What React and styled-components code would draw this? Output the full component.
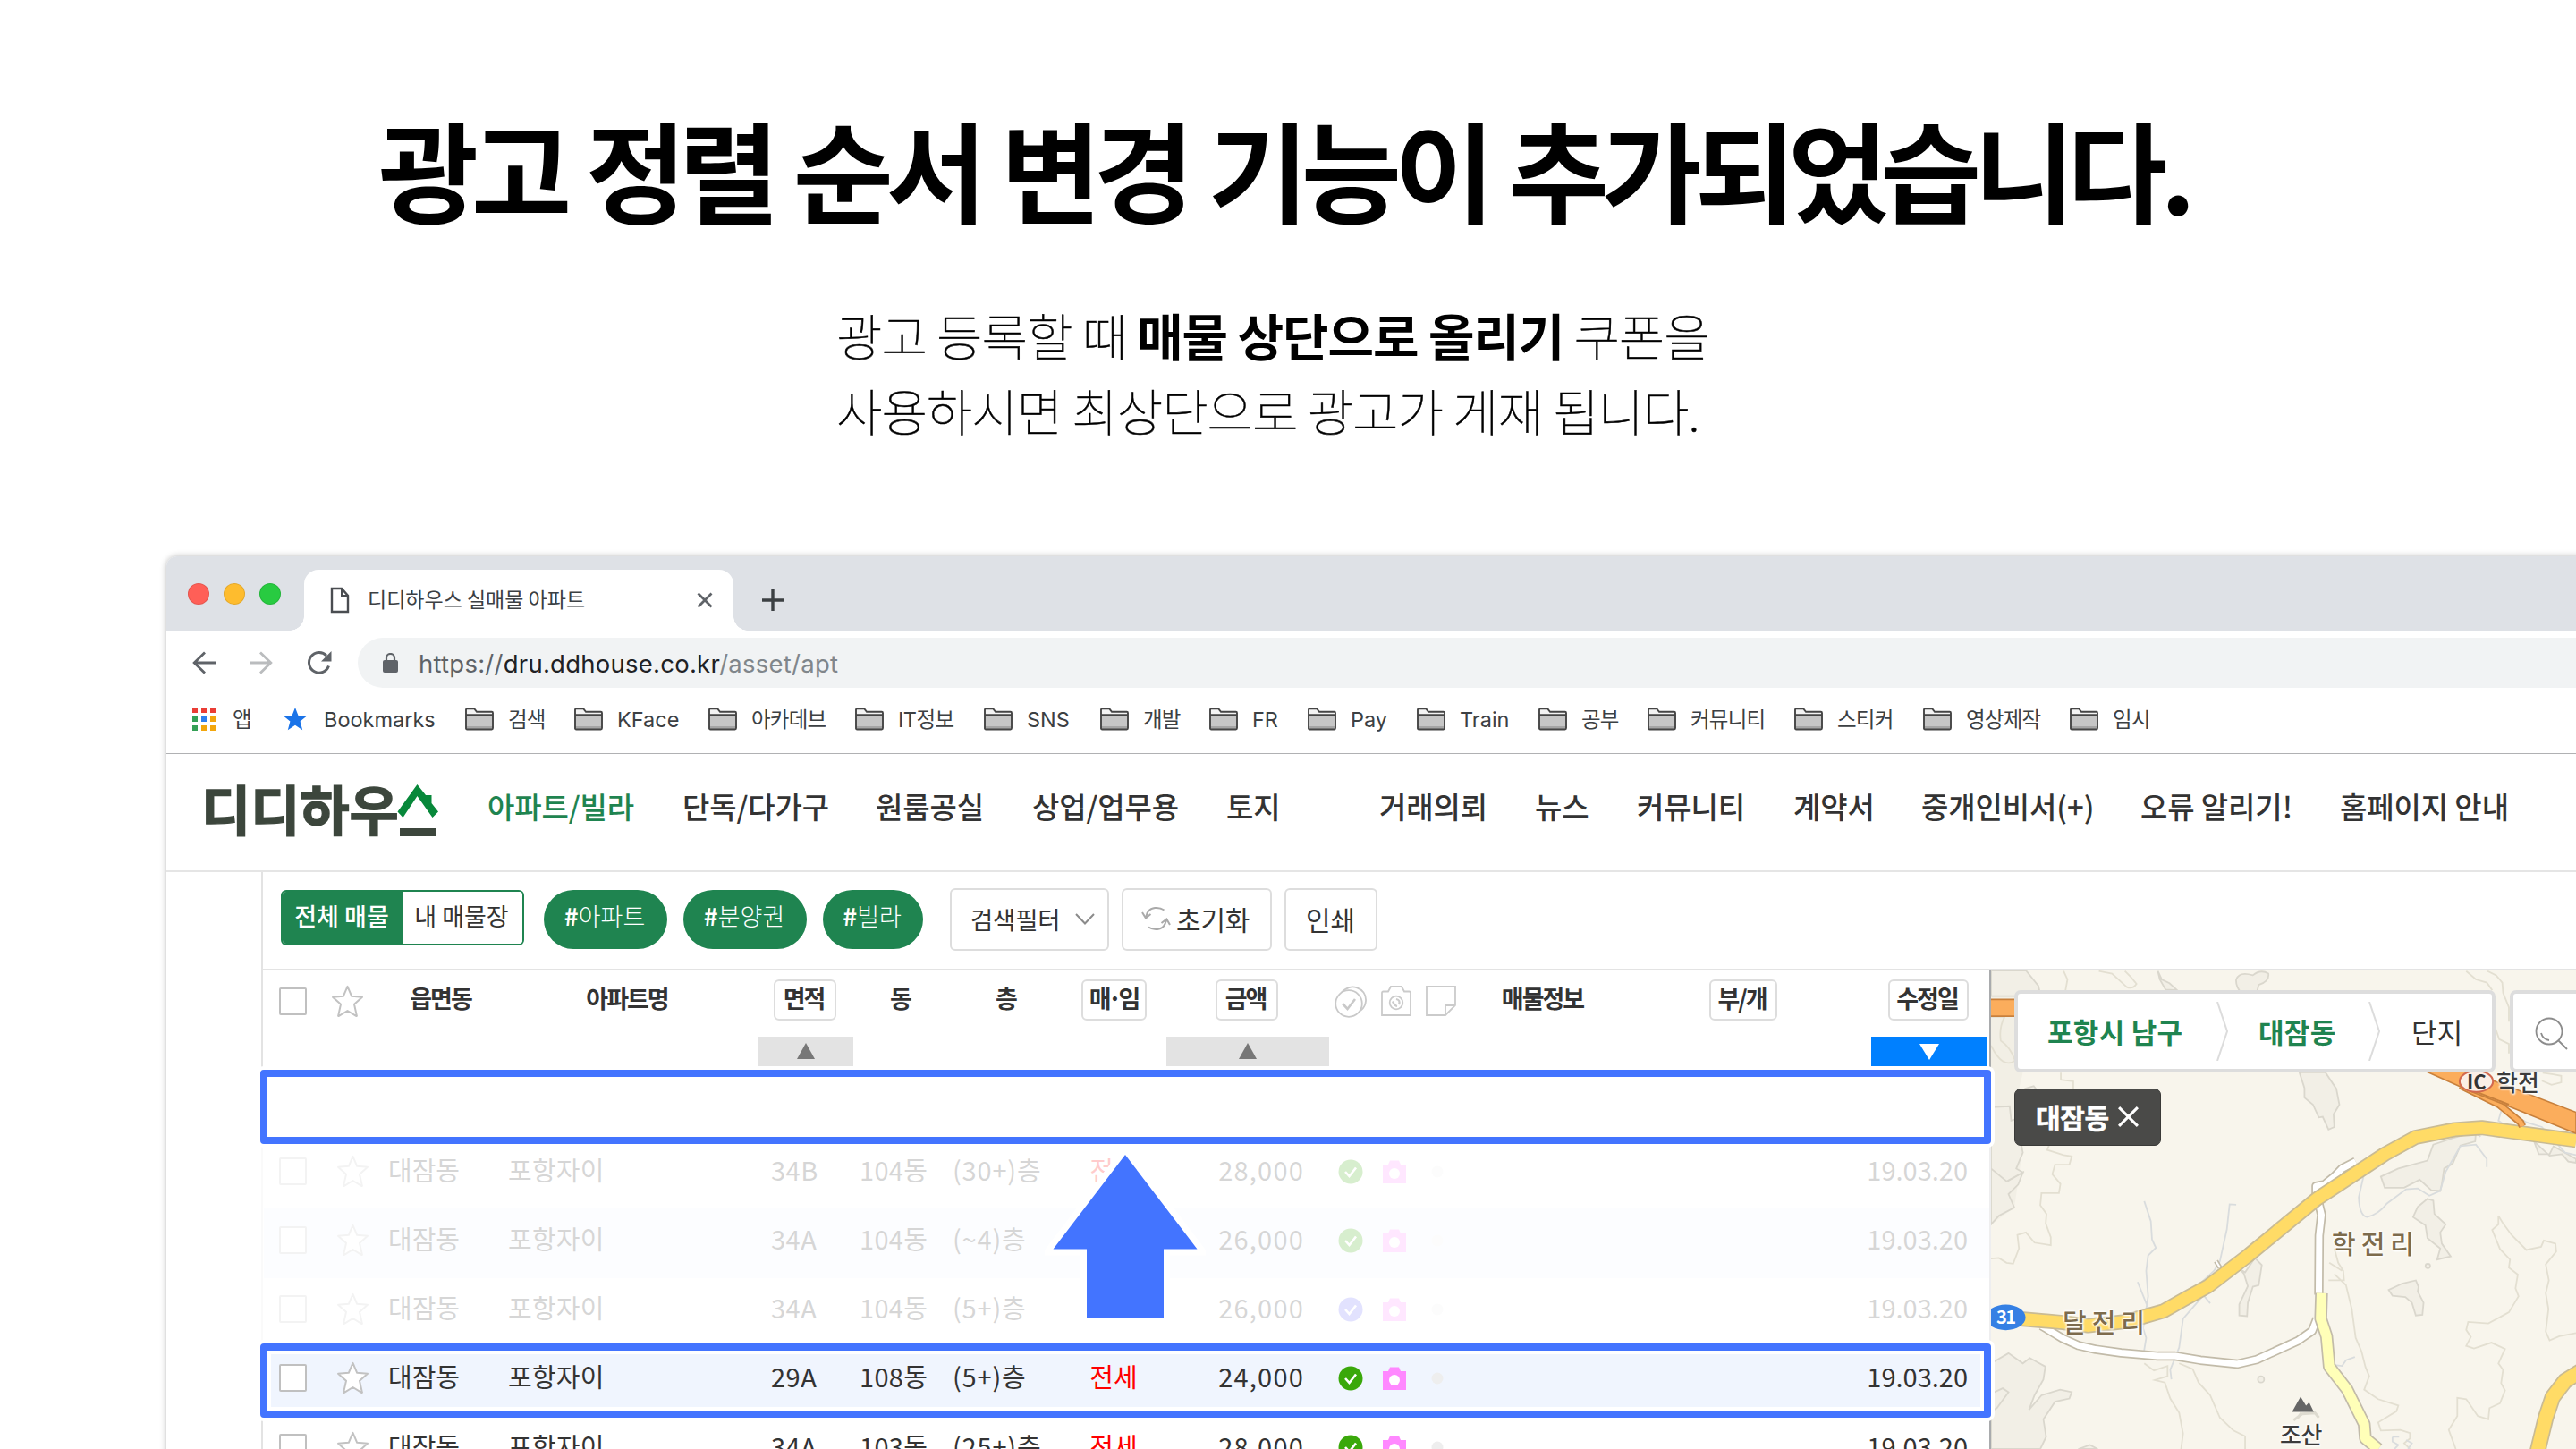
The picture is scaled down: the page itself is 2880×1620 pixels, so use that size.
import React from "react";
import styled, { createGlobalStyle, css } from "styled-components";

const KR = '"Noto Sans CJK KR", "Noto Sans", sans-serif';
const UI = 'Inter, "Noto Sans CJK KR", sans-serif';
const GREEN = "#1f8450";
const BLUE = "#4374ff";

const GlobalStyle = createGlobalStyle`
  *, *::before, *::after { box-sizing: border-box; }
  body { margin: 0; background: #fff; overflow: hidden; }
  svg { display: block; flex: none; }
`;

const Page = styled.main`
  width: 2880px;
  height: 1620px;
  overflow: hidden;
  background: #fff;
  color: #000;
  font-family: ${KR};
  white-space: nowrap;
`;

/* ---------- Hero ---------- */

const Hero = styled.header`
  height: 622px;
  padding-top: 117px;
`;

const Title = styled.h1`
  margin: 0;
  padding-left: 423px;
  font-size: 122px;
  line-height: 140px;
  font-weight: 700;
  letter-spacing: -8.15px;
  word-spacing: 4.2px;
`;

const Subtitle = styled.p`
  margin: 75px 0 0;
  padding-left: 935px;
  font-size: 56px;
  line-height: 83.5px;
  font-weight: 100;
  letter-spacing: -1.1px;
  -webkit-text-stroke: 0.5px #000;
  b { font-weight: 700; -webkit-text-stroke: 0; }
`;

/* ---------- Browser chrome ---------- */

const BrowserWindow = styled.section`
  margin-left: 186px;
  width: 2720px;
  height: 1100px;
  background: #fff;
  border-radius: 12px 0 0 0;
  box-shadow: 0 0 7px rgba(0, 0, 0, 0.28);
`;

const TabStrip = styled.div`
  display: flex;
  height: 83px;
  padding: 15px 0 0 24px;
  background: #dee1e6;
  border-radius: 12px 0 0 0;
`;

const Lights = styled.div`
  display: flex;
  gap: 16px;
  width: 130px;
  padding-top: 15px;
`;

const Light = styled.span`
  width: 24px;
  height: 24px;
  border-radius: 50%;
  background: ${(p) => p.$color};
  border: 1px solid rgba(0, 0, 0, 0.1);
`;

const Tab = styled.div`
  position: relative;
  display: flex;
  align-items: center;
  width: 480px;
  height: 68px;
  padding: 0 23px 0 29px;
  background: #fff;
  border-radius: 16px 16px 0 0;
  &::before, &::after {
    content: "";
    position: absolute;
    bottom: 0;
    width: 16px;
    height: 16px;
  }
  &::before { right: 100%; background: radial-gradient(circle at 0 0, transparent 15.5px, #fff 16px); }
  &::after { left: 100%; background: radial-gradient(circle at 100% 0, transparent 15.5px, #fff 16px); }
`;

const TabTitle = styled.span`
  flex: 1;
  padding: 0 0 5px 20px;
  font-size: 23px;
  line-height: 30px;
  color: #3c4043;
`;

const NewTab = styled.div`
  padding: 22px 0 0 32px;
`;

const Toolbar = styled.div`
  display: flex;
  align-items: center;
  height: 72px;
  padding-left: 29px;
`;

const NavButtons = styled.div`
  display: flex;
  align-items: center;
  gap: 38px;
  width: 185px;
`;

const AddressBar = styled.div`
  flex: 1;
  display: flex;
  align-items: center;
  gap: 23px;
  height: 56px;
  padding-left: 28px;
  background: #f1f3f4;
  border-radius: 28px 0 0 28px;
`;

const Url = styled.span`
  padding-top: 1px;
  font-family: ${UI};
  font-size: 27.5px;
  line-height: 36px;
  color: #80868b;
  letter-spacing: 0.25px;
  i { font-style: normal; color: #5f6368; }
  b { font-weight: 400; color: #202124; }
`;

const BookmarkBar = styled.div`
  display: flex;
  height: 66px;
  padding: 0 0 11px 29px;
  border-bottom: 1px solid #b0b1b3;
`;

const Bookmark = styled.span`
  display: flex;
  align-items: center;
  gap: ${(p) => p.$gap || 16}px;
  width: ${(p) => p.$w}px;
  font-family: ${UI};
  font-size: 23.5px;
  line-height: 30px;
  color: #3c4043;
  letter-spacing: ${(p) => p.$ls || 0}px;
  span { padding-top: 2px; }
`;

/* ---------- Site header ---------- */

const SiteNav = styled.nav`
  display: flex;
  align-items: center;
  height: 132px;
  padding: 0 0 15px 39px;
  border-bottom: 2px solid #e5e5e5;
`;

const Logo = styled.div`
  display: flex;
  align-items: center;
  width: 320px;
  height: 100px;
  padding-top: 5px;
  color: #3c463c;
  font-size: 60px;
  line-height: 80px;
  font-weight: 700;
  svg { margin-top: 6px; }
`;

const Wordmark = styled.span`
  width: 219px;
  letter-spacing: 0;
  -webkit-text-stroke: 1.4px #3c463c;
`;

const NavItem = styled.a`
  width: ${(p) => p.$w}px;
  font-size: 33px;
  line-height: 44px;
  font-weight: 500;
  letter-spacing: -0.1px;
  color: ${(p) => (p.$active ? GREEN : "#333")};
`;

/* ---------- Filters ---------- */

const Content = styled.div`
  margin-left: 106px;
  border-left: 2px solid #e3e3e3;
`;

const FilterBar = styled.div`
  display: flex;
  height: 110px;
  padding: 18px 0 0 20px;
  border-bottom: 2px solid #e3e3e3;
`;

const Segmented = styled.div`
  display: flex;
  width: 272px;
  height: 62px;
  margin: 2px 22px 0 0;
  border: 2px solid ${GREEN};
  border-radius: 6px;
  overflow: hidden;
`;

const Segment = styled.span`
  flex: 1;
  padding: 7px 2px 0 0;
  text-align: center;
  font-size: 27px;
  line-height: 40px;
  font-weight: ${(p) => (p.$on ? 500 : 400)};
  color: ${(p) => (p.$on ? "#fff" : "#333")};
  background: ${(p) => (p.$on ? GREEN : "#fff")};
`;

const Pill = styled.span`
  width: ${(p) => p.$w}px;
  height: 66px;
  margin: 2px 18px 0 0;
  padding: 9px 2px 0 0;
  border-radius: 33px;
  background: ${GREEN};
  color: #fff;
  text-align: center;
  font-size: 27px;
  line-height: 40px;
  font-weight: 300;
  letter-spacing: 0;
  b { font-weight: 700; }
`;

const FilterButton = styled.button`
  display: flex;
  align-items: center;
  justify-content: flex-start;
  gap: ${(p) => p.$gap || 0}px;
  width: ${(p) => p.$w}px;
  height: 70px;
  margin: 0 14px 0 ${(p) => p.$ml || 0}px;
  padding: 0 0 2px ${(p) => p.$pl}px;
  border: 2px solid #ddd;
  border-radius: 6px;
  background: #fff;
  color: #333;
  font-family: ${KR};
  font-size: ${(p) => p.$fs || 30}px;
  line-height: 40px;
  font-weight: 400;
  letter-spacing: -0.2px;
`;

/* ---------- Listing table ---------- */

const Split = styled.div`
  display: flex;
`;

const Listing = styled.div`
  position: relative;
  z-index: 1;
  width: 1932px;
  height: 560px;
  padding-left: 1px;
  border-right: 2px solid #a9abad;
`;

const columns = css`
  display: grid;
  grid-template-columns: 65px 71px 124px 293px 106px 106px 130px 114px 182px 49px 51px 50px 178px 272px 6px 130px;
`;

const HeadRow = styled.div`
  ${columns}
  height: 111px;
  padding-top: 10px;
`;

const HeadCell = styled.div`
  display: flex;
  flex-direction: column;
  align-items: center;
  gap: 18px;
`;

const HeadLabel = styled.span`
  display: flex;
  align-items: center;
  justify-content: center;
  width: ${(p) => (p.$w ? p.$w + "px" : "auto")};
  height: 46px;
  margin-right: ${(p) => (p.$w ? 3 : 1)}px;
  padding-bottom: 5px;
  border: ${(p) => (p.$w ? "2px solid #ddd" : "2px solid transparent")};
  border-radius: 6px;
  color: #333;
  font-size: 27px;
  line-height: 36px;
  font-weight: 700;
  letter-spacing: ${(p) => p.$ls || -2}px;
  text-indent: ${(p) => (p.$w ? -2 : 0)}px;
`;

const HeadIcon = styled.span`
  display: flex;
  align-items: center;
  justify-content: center;
  height: 48px;
  margin-right: ${(p) => p.$shift || 0}px;
`;

const Sort = styled.span`
  display: flex;
  align-items: center;
  justify-content: center;
  align-self: stretch;
  height: 33px;
  background: ${(p) => (p.$on ? "#0080ff" : "#e3e3e3")};
`;

const Slot = styled.div`
  height: 79px;
`;

const Row = styled.div`
  ${columns}
  height: ${(p) => p.$h}px;
  padding-bottom: 12px;
  align-items: center;
  background: ${(p) => (p.$tint ? "#f0f5fe" : "#fff")};
  color: #333;
  font-size: 29px;
  line-height: 40px;
`;

const Cell = styled.span`
  display: flex;
  justify-content: ${(p) => p.$align || "flex-start"};
  padding: 0 ${(p) => p.$pr || 0}px 0 ${(p) => p.$pl || 0}px;
  color: ${(p) => p.$color || "inherit"};
  letter-spacing: ${(p) => p.$ls || 0}px;
`;

const IconCell = styled(Cell)`
  padding-top: 5px;
`;

const Veil = styled.div`
  position: absolute;
  left: -3px;
  right: -2px;
  top: 190px;
  height: 230px;
  background: rgba(255, 255, 255, 0.8);
`;

const Highlight = styled.div`
  position: absolute;
  left: -3px;
  top: ${(p) => p.$top}px;
  width: 1935px;
  height: 83px;
  border: 8px solid ${BLUE};
  border-radius: 4px;
  box-shadow: 0 0 0 4px #fff, inset 0 0 0 4px #fff;
`;

const ArrowOverlay = styled.div`
  position: absolute;
  left: 874px;
  top: 196px;
`;

/* ---------- Map ---------- */

const MapPane = styled.div`
  position: relative;
  width: 654px;
  height: 535px;
  overflow: hidden;
  background: #f8f5ec;
`;

const MapControls = styled.div`
  position: absolute;
  left: 26px;
  top: 22px;
  display: flex;
  gap: 16px;
`;

const Crumbs = styled.div`
  display: flex;
  align-items: center;
  width: 538px;
  height: 92px;
  padding: 0 0 0 33px;
  background: #fff;
  border: 4px solid #ddd;
  border-radius: 7px;
`;

const Crumb = styled.span`
  width: ${(p) => p.$w}px;
  font-size: 31px;
  line-height: 40px;
  font-weight: ${(p) => (p.$on ? 700 : 400)};
  letter-spacing: 0.3px;
  color: ${(p) => (p.$on ? GREEN : "#333")};
`;

const CrumbGap = styled.span`
  width: ${(p) => p.$w}px;
`;

const SearchBox = styled.div`
  width: 200px;
  height: 92px;
  padding: 26px 0 0 24px;
  background: #fff;
  border: 4px solid #ddd;
  border-radius: 7px;
`;

const Chip = styled.div`
  position: absolute;
  left: 26px;
  top: 132px;
  display: flex;
  align-items: center;
  gap: 9px;
  width: 164px;
  height: 64px;
  padding: 0 0 2px 23px;
  background: #4a4a48;
  border: 1px solid #3a3a38;
  border-radius: 7px;
  color: #fff;
  font-size: 30px;
  line-height: 40px;
  font-weight: 700;
  letter-spacing: -0.3px;
  -webkit-text-stroke: 0.6px #fff;
`;

const MapLabel = styled.span`
  position: absolute;
  left: ${(p) => p.$x}px;
  top: ${(p) => p.$y}px;
  font-size: ${(p) => p.$fs || 29}px;
  line-height: 36px;
  font-weight: ${(p) => p.$fw || 500};
  letter-spacing: ${(p) => p.$ls || 0}px;
  color: ${(p) => p.$color || "#7d6b4c"};
  text-shadow: ${(p) =>
    p.$plain ? "none" : "0 0 3px #fff, 0 0 3px #fff, 1px 1px 2px #fff, -1px -1px 2px #fff"};
`;

/* ---------- Icons ---------- */

const FileIcon = () => (
  <svg width="22" height="30" viewBox="0 0 22 30" fill="none" stroke="#4a4d51" strokeWidth="2.4">
    <path d="M2 2h11l7 8v18H2z" />
    <path d="M13 2v8h7" strokeWidth="2" />
  </svg>
);

const CloseIcon = ({ size = 18, color = "#5f6368", width = 2.8 }) => (
  <svg width={size} height={size} viewBox="0 0 18 18" stroke={color} strokeWidth={width}>
    <path d="M1.5 1.5l15 15M16.5 1.5l-15 15" />
  </svg>
);

const PlusIcon = () => (
  <svg width="24" height="24" viewBox="0 0 24 24" stroke="#3c4043" strokeWidth="3.4">
    <path d="M12 0v24M0 12h24" />
  </svg>
);

const ArrowIcon = ({ forward }) => (
  <svg width="26" height="26" viewBox="0 0 26 26" fill="none" strokeWidth="2.8"
    stroke={forward ? "#babcbe" : "#5f6368"} transform={forward ? "scale(-1,1)" : undefined}>
    <path d="M26 13H2.5M14 1.5L2.2 13 14 24.5" />
  </svg>
);

const ReloadIcon = () => (
  <svg width="28" height="28" viewBox="0 0 28 28" fill="none" stroke="#5f6368" strokeWidth="3">
    <path d="M24.5 17.5A11.3 11.3 0 1 1 22 6" />
    <path d="M27.5 1v11.5H16z" fill="#5f6368" stroke="none" />
  </svg>
);

const LockIcon = () => (
  <svg width="17" height="22" viewBox="0 0 17 22">
    <rect x="0" y="8" width="17" height="14" rx="2" fill="#5f6368" />
    <path d="M4 9V5.5a4.5 4.5 0 0 1 9 0V9" fill="none" stroke="#5f6368" strokeWidth="2.2" />
  </svg>
);

const AppsIcon = () => {
  const colors = ["#ea3d35", "#ea3d35", "#ea3d35", "#34a056", "#2d7fee", "#f2a60d", "#34a056", "#f2a60d", "#f2a60d"];
  return (
    <svg width="26" height="26" viewBox="0 0 26 26">
      {colors.map((c, i) => (
        <rect key={i} x={(i % 3) * 10} y={Math.floor(i / 3) * 10} width="6" height="6" fill={c} />
      ))}
    </svg>
  );
};

const BookmarkStar = () => (
  <svg width="26" height="26" viewBox="0 0 26 26">
    <path d="M13 0l3.6 9.2 9.4.4-7.400 6 2.600 9.600L13 19.800 4.800 25.200l2.600-9.600L0 9.600l9.400-.4z" fill="#1a73e8" />
  </svg>
);

const FolderIcon = () => (
  <svg width="32" height="26" viewBox="0 0 32 26">
    <path d="M1 24V2.500Q1 1.200 2.200 1.200h8L13 4.800h16.800Q31 4.800 31 6v18z" fill="#f3f3f3" />
    <path d="M1 8.500h30V24H1z" fill="#c6c6c6" />
    <path d="M1 21h30v3H1z" fill="#a5a5a5" />
    <path d="M1 8.200h30M1 23.800V2.500Q1 1.200 2.200 1.200h8L13 4.800h16.800Q31 4.800 31 6v17q0 1.500-1.300 1.500H2.300Q1 24.500 1 23z"
      fill="none" stroke="#454545" strokeWidth="1.9" />
  </svg>
);

const RoofMark = () => (
  <svg width="48" height="60" viewBox="0 0 48 60">
    <path d="M22.500 1L32 13h6.500v9L46 31.500 39.500 38 22.500 14 6.500 38 .5 31.500z" fill="#07883a" />
    <path d="M3 50h40v9H3z" fill="#3c463c" />
  </svg>
);

const ChevronIcon = () => (
  <svg width="22" height="13" viewBox="0 0 22 13" fill="none" stroke="#8b8b8b" strokeWidth="2">
    <path d="M1 1l10 10.500L21 1" />
  </svg>
);

const RefreshIcon = () => (
  <svg width="33" height="28" viewBox="0 0 33 28" fill="none" stroke="#aaa" strokeWidth="2">
    <path d="M25.500 4.500C20 .8 10 .5 6.500 8L5 13M1 7l4 6.500L10.500 9" />
    <path d="M8 23.500c5.500 3.700 15 4 18.500-3.500l1.800-5M32 21l-3.700-6.500L22.500 19" />
  </svg>
);

const CheckBox = () => (
  <svg width="31" height="31" viewBox="0 0 31 31">
    <rect x="1" y="1" width="29" height="29" rx="1" fill="#fff" stroke="#c0c0c0" strokeWidth="2" />
  </svg>
);

const StarIcon = () => (
  <svg width="37" height="37" viewBox="0 0 37 37" fill="#fff" stroke="#c2c2c2" strokeWidth="2" strokeLinejoin="round">
    <path d="M18.500 1.800l4.700 11 11.800 1-9 8 2.800 12.600q.3 1-.7.500L18.500 29 8.900 34.900q-1 .5-.7-.5L11 21.800l-9-8 11.800-1z" />
  </svg>
);

const HeadCheckIcon = () => (
  <svg width="36" height="37" viewBox="0 0 36 37" fill="none" stroke="#c9c9c9" strokeWidth="1.800">
    <circle cx="16" cy="21" r="14.800" />
    <path d="M8 8.500C17-3 36 3 35 18c-.3 4-2 8-6 11" />
    <path d="M9 21l5.500 6L23 16" strokeWidth="2.600" />
  </svg>
);

const HeadCameraIcon = () => (
  <svg width="34" height="34" viewBox="0 0 34 34" fill="none" stroke="#cbcbcb" strokeWidth="1.800">
    <path d="M1 33V8q0-1.500 1.500-1.500H8L11 1h12l3 5.500h5.500Q33 6.500 33 8v25z" />
    <circle cx="17" cy="19" r="7.300" />
    <path d="M13 17.500q2 5 5 5.500M17 15q5 1 3 6" strokeWidth="2.200" />
  </svg>
);

const HeadNoteIcon = () => (
  <svg width="34" height="34" viewBox="0 0 34 34" fill="none" stroke="#cbcbcb" strokeWidth="1.800">
    <path d="M1 1h32v21L22 33H1zM22 33V22h11" />
  </svg>
);

const Triangle = ({ down }) => (
  <svg width="22" height="19" viewBox="0 0 22 19">
    <path d={down ? "M0 1h22L11 19z" : "M1 18h20L11 0z"} fill={down ? "#fff" : "#777"} />
  </svg>
);

const VerifiedIcon = ({ color }) => (
  <svg width="28" height="28" viewBox="0 0 28 28">
    <circle cx="14" cy="14" r="13.500" fill={color} />
    <path d="M8 14l4.500 5L20 9.500" fill="none" stroke="#fff" strokeWidth="2.600" />
  </svg>
);

const CameraIcon = () => (
  <svg width="26" height="26" viewBox="0 0 26 26">
    <path d="M0 26V5h6l2-4.500h10L20 5h6v21z" fill="#ff88ff" />
    <circle cx="13" cy="15" r="6" fill="#fff" />
  </svg>
);

const MemoDot = () => (
  <svg width="14" height="14" viewBox="0 0 14 14">
    <circle cx="7" cy="7" r="6.500" fill="#eee" />
  </svg>
);

const UpArrow = () => (
  <svg width="180" height="200" viewBox="1168 1281 180 200">
    <path d="M1258 1291l80.500 105.500H1301V1474h-86v-77.500h-37.500z" fill="#fff" stroke="#fff" strokeWidth="14" />
    <path d="M1258 1291l80.500 105.500H1301V1474h-86v-77.500h-37.500z" fill={BLUE} />
  </svg>
);

const CrumbArrow = () => (
  <svg width="13" height="66" viewBox="0 0 13 66" fill="none" stroke="#dcdcdc" strokeWidth="2">
    <path d="M1 0l11 33L1 66" />
  </svg>
);

const SearchIcon = () => (
  <svg width="38" height="38" viewBox="0 0 38 38" fill="none" stroke="#8c8c8c" strokeWidth="1.800">
    <circle cx="16" cy="16" r="14.500" />
    <path d="M7 18q2 7 9 8M26.500 26.500L36 36" />
  </svg>
);

const contours = [
  "M60 305Q90 380 122 352Q110 310 85 290Q80 250 95 215H60",
  "M240 390V412L272 417V465L290 492L284 530L245 547L214 555L218 590L205 632L247 648L268 652L262 678H225L218 708L239 738L235 767H190L187 805L203 832L201 862L214 905V930L172 922L150 890L128 898L132 940L117 988L100 985L80 970L60 972",
  "M247 72L257 98L252 132M338 72L372 80L410 122Q425 130 435 112L420 90L405 72",
  "M1285 72L1310 98L1338 108L1352 132M1340 72L1362 85L1378 108L1380 140L1395 185V230M1360 250L1370 285L1395 300V330M1482 390L1510 395L1530 400V420L1505 428L1480 415",
  "M1368 838L1380 862L1402 898L1440 945L1478 935L1485 915L1515 925L1517 950L1490 990L1498 1040L1490 1080L1497 1130L1490 1200L1500 1228L1525 1215L1568 1205",
  "M1368 838V865L1352 882L1372 942L1398 975L1395 1000L1418 1022L1412 1065L1420 1090L1395 1140L1342 1175L1290 1170L1285 1195L1297 1217L1285 1245L1305 1253L1350 1235L1385 1255L1368 1300L1380 1320L1375 1362L1385 1385L1372 1425L1345 1440L1342 1475L1315 1465L1285 1412L1262 1408V1465L1240 1508L1258 1568",
  "M545 1300L580 1318L595 1360L625 1400L650 1470L685 1510L715 1528V1568M455 1300L480 1322L515 1308V1340L482 1352L508 1360L522 1410L545 1455L555 1520L550 1568",
  "M945 940L955 985L968 1010L970 1040L930 1040M945 1020L975 1055L990 1130L1000 1220L1015 1262L1025 1310L1035 1340L1022 1382L1058 1412L1110 1432L1105 1450L1058 1485L1065 1510L1115 1508L1140 1518V1535L1125 1550L1140 1568M932 985L965 1010",
];

const hills = [
  "M60 70H150L182 118L188 150H60z",
  "M60 690L100 712L105 728L142 702L130 740L105 770L120 812L80 838L60 865z",
  "M60 498L108 495L112 540L135 530L148 560L135 600L142 640L125 690L142 702L100 730L60 690z",
  "M692 98Q700 72 735 85Q755 65 775 80Q778 105 750 115L745 140H705Q690 120 692 98z",
  "M490 72L500 98L520 110L540 132L510 130L495 98z",
  "M855 389L868 438V468L890 490L905 530L915 528L930 568L945 560L943 520L958 490L950 440L922 389z",
  "M1065 715L1110 690L1185 665L1200 615L1250 595L1310 575L1308 605L1270 618L1250 675L1228 690L1222 740L1218 760L1195 758L1165 725L1125 750H1075z",
  "M1185 785L1200 790L1203 832L1232 865L1218 890L1222 925L1245 965L1210 975L1218 940L1185 908L1180 868L1148 842L1160 810z",
  "M1155 1040L1162 1060L1160 1075L1175 1110L1172 1148L1155 1150L1145 1110L1128 1092L1095 1088L1085 1070L1120 1050z",
  "M740 970L758 992L750 1055L735 1060L722 1110L720 1152L700 1150V1115L722 1058L712 1020L702 1005L715 1015z",
  "M60 1300L105 1268L142 1300L160 1283L200 1310L195 1350L172 1400L158 1445L190 1400L238 1382L268 1390L262 1410L225 1420L195 1475L202 1530L187 1568H60z",
  "M60 1395L90 1378L105 1390L75 1440L60 1450z",
  "M1460 605L1472 645H1500L1510 620L1568 660V672L1548 668L1532 645L1500 650z",
  "M148 440L170 432L182 450L175 470H150z",
  "M285 1568L315 1555L335 1568z",
];

const streams = [
  "M455 792L472 855L475 912L485 938L465 962L460 1010L465 1090L452 1190L460 1220L452 1280M438 1045L470 1142",
  "M692 803L675 802L668 880L650 980L635 1010L590 1060L625 1112M605 1090L555 1160L545 1250L522 1320L525 1350",
  "M1022 705L1008 780Q1010 840 1030 842Q1060 832 1080 800L1130 755L1160 752L1190 775L1218 760L1232 700L1270 620L1310 615L1338 660V685",
  "M998 1280L975 1290L965 1308L945 1305M1095 1530H1112M1095 1530V1545L1110 1555L1100 1568M1130 1540L1145 1550L1135 1568",
  "M1310 580L1322 590M1375 510L1368 540L1380 550M1395 510L1440 545L1480 560L1540 640L1568 648",
];

const YELLOW = "M130 1160L245 1172L310 1182L400 1170L450 1155L505 1136L560 1098L620 1058L720 965L900 785L1075 645L1155 592L1255 568L1325 562L1568 602";
const WHITE_ROAD = "M190 1182L245 1222L285 1244L330 1256L395 1267L490 1277H535L600 1290L695 1302L745 1288L850 1230L888 1198L900 1160";
const WHITE_ROAD2 = "M905 1085L906 900L912 835L905 800L898 765V745L920 740L945 715L965 690L1000 668";
const PALE_ROAD = "M912 1080L910 1160L925 1215L932 1310L978 1382L1022 1490L1025 1535L1058 1568";

const Road = ({ d, color, width, edge = "#c2bba9" }) => (
  <g fill="none" strokeLinejoin="round">
    <path d={d} stroke={edge} strokeWidth={width + 3.4} vectorEffect="non-scaling-stroke" />
    <path d={d} stroke={color} strokeWidth={width} vectorEffect="non-scaling-stroke" />
  </g>
);

const MapArt = () => (
  <svg width="654" height="535" viewBox="60 70 1508 1498" preserveAspectRatio="none">
    <rect x="60" y="70" width="1508" height="1498" fill="#f8f5ec" />
    <path d="M60 70H150L185 120L140 400L112 540L145 600L120 812L60 865z" fill="#f0ede2" opacity=".7" />
    <g fill="none" stroke="#e3dfd1" strokeWidth="1.800">
      {contours.map((d) => <path key={d} d={d} vectorEffect="non-scaling-stroke" />)}
    </g>
    <g fill="#f2efe6" stroke="#dad7cd" strokeWidth="1.800">
      {hills.map((d) => <path key={d} d={d} vectorEffect="non-scaling-stroke" />)}
      <ellipse cx="756" cy="1350" rx="8" ry="10" vectorEffect="non-scaling-stroke" />
      <ellipse cx="1186" cy="995" rx="6" ry="7" vectorEffect="non-scaling-stroke" />
    </g>
    <g fill="none" stroke="#d9dcdd" strokeWidth="1.800">
      {streams.map((d) => <path key={d} d={d} vectorEffect="non-scaling-stroke" />)}
    </g>
    <Road d={WHITE_ROAD} color="#fff" width={7} />
    <Road d={WHITE_ROAD2} color="#fff" width={7} />
    <Road d="M650 1000L640 980" color="#fff" width={2} />
    <Road d={YELLOW} color="#ffdb66" width={13.500} edge="#c9bb94" />
    <Road d={PALE_ROAD} color="#ffffb8" width={11} />
    <Road d="M1468 1580L1490 1470L1508 1405L1540 1355L1580 1325" color="#ffdb66" width={15} edge="#c9bb94" />
    <Road d="M40 187H200" color="#fbad5c" width={17} edge="#c8803c" />
    <Road d="M1270 430L1370 490L1425 545L1430 558" color="#fbad5c" width={5} edge="#c8803c" />
    <path d="M1180 385L1300 450L1380 488L1568 580V514L1290 385z" fill="#fbad5c" stroke="#c8803c" strokeWidth="1.600" vectorEffect="non-scaling-stroke" />
    <path d="M1290 440L1395 490" stroke="#c8803c" strokeWidth="2" vectorEffect="non-scaling-stroke" />
    <ellipse cx="1311" cy="417" rx="43" ry="33" fill="#fbeee6" stroke="#d2694f" strokeWidth="2" vectorEffect="non-scaling-stroke" />
    <ellipse cx="98" cy="1156" rx="51" ry="40" fill="#3580e4" />
    <path d="M840 1478L862 1458L895 1455L905 1470M850 1472L860 1455" fill="none" stroke="#dedbd0" strokeWidth="3" vectorEffect="non-scaling-stroke" />
    <path d="M836 1452L858 1404L872 1432L880 1422L892 1452z" fill="#666" />
  </svg>
);

/* ---------- Data ---------- */

const bookmarks = [
  ["검색", 122, -0.8], ["KFace", 150], ["아카데브", 164, -0.8], ["IT정보", 144, -0.5], ["SNS", 130],
  ["개발", 122, -0.8], ["FR", 110], ["Pay", 122], ["Train", 136], ["공부", 122, -0.8],
  ["커뮤니티", 164, -0.8], ["스티커", 144, -0.8], ["영상제작", 164, -0.8], ["임시", 120, -0.8],
];

const navItems = [
  ["아파트/빌라", 218], ["단독/다가구", 216], ["원룸공실", 175], ["상업/업무용", 217], ["토지", 171],
  ["거래의뢰", 174], ["뉴스", 114], ["커뮤니티", 175], ["계약서", 143], ["중개인비서(+)", 245],
  ["오류 알리기!", 223], ["홈페이지 안내", 200],
];

const rows = [
  { area: "34B", dong: "104동", floor: "(30+)층", price: "28,000", h: 76 },
  { area: "34A", dong: "104동", floor: "(~4)층", price: "26,000", h: 78, tint: true },
  { area: "34A", dong: "104동", floor: "(5+)층", price: "26,000", h: 76, mark: "#6f6ff8" },
  { area: "29A", dong: "108동", floor: "(5+)층", price: "24,000", h: 78, tint: true },
  { area: "34A", dong: "103동", floor: "(25+)층", price: "28,000", h: 77 },
];

const ListingRow = ({ row }) => (
  <Row $h={row.h} $tint={row.tint}>
    <IconCell $pl={17}><CheckBox /></IconCell>
    <IconCell $pl={16}><StarIcon /></IconCell>
    <Cell $pl={3}>대잠동</Cell>
    <Cell $pl={13} $ls={0.2}>포항자이</Cell>
    <Cell $pl={14} $ls={0.5}>{row.area}</Cell>
    <Cell $pl={7} $ls={0.3}>{row.dong}</Cell>
    <Cell $pl={5} $ls={0.8}>{row.floor}</Cell>
    <Cell $align="center" $pr={4} $color="#ff0000">전세</Cell>
    <Cell $align="flex-end" $pr={28} $ls={1.2}>{row.price}</Cell>
    <IconCell $align="center" $pr={2}><VerifiedIcon color={row.mark || "#3aa80a"} /></IconCell>
    <IconCell $align="center" $pr={3}><CameraIcon /></IconCell>
    <IconCell $pl={14}><MemoDot /></IconCell>
    <span />
    <span />
    <span />
    <Cell $align="flex-end" $pr={22}>19.03.20</Cell>
  </Row>
);

export default function App() {
  return (
    <Page>
      <GlobalStyle />
      <Hero>
        <Title>광고 정렬 순서 변경 기능이 추가되었습니다.</Title>
        <Subtitle>
          광고 등록할 때 <b>매물 상단으로 올리기</b> 쿠폰을
          <br />
          사용하시면 최상단으로 광고가 게재 됩니다.
        </Subtitle>
      </Hero>

      <BrowserWindow>
        <TabStrip>
          <Lights>
            <Light $color="#ff5f57" />
            <Light $color="#febc2e" />
            <Light $color="#28cb41" />
          </Lights>
          <Tab>
            <FileIcon />
            <TabTitle>디디하우스 실매물 아파트</TabTitle>
            <CloseIcon />
          </Tab>
          <NewTab><PlusIcon /></NewTab>
        </TabStrip>

        <Toolbar>
          <NavButtons>
            <ArrowIcon />
            <ArrowIcon forward />
            <ReloadIcon />
          </NavButtons>
          <AddressBar>
            <LockIcon />
            <Url><i>https://</i><b>dru.ddhouse.co.kr</b>/asset/apt</Url>
          </AddressBar>
        </Toolbar>

        <BookmarkBar>
          <Bookmark $w={102} $gap={19}><AppsIcon /><span>앱</span></Bookmark>
          <Bookmark $w={203} $gap={19}><BookmarkStar /><span>Bookmarks</span></Bookmark>
          {bookmarks.map(([name, w, ls]) => (
            <Bookmark key={name} $w={w} $ls={ls}><FolderIcon /><span>{name}</span></Bookmark>
          ))}
        </BookmarkBar>

        <SiteNav>
          <Logo>
            <Wordmark>디디하우</Wordmark>
            <RoofMark />
          </Logo>
          {navItems.map(([name, w], i) => (
            <NavItem key={name} $w={w} $active={i === 0}>{name}</NavItem>
          ))}
        </SiteNav>

        <Content>
          <FilterBar>
            <Segmented>
              <Segment $on>전체 매물</Segment>
              <Segment>내 매물장</Segment>
            </Segmented>
            <Pill $w={138}><b>#</b>아파트</Pill>
            <Pill $w={138}><b>#</b>분양권</Pill>
            <Pill $w={112}><b>#</b>빌라</Pill>
            <FilterButton $w={178} $ml={12} $pl={21} $gap={17} $fs={27.5}>검색필터<ChevronIcon /></FilterButton>
            <FilterButton $w={168} $pl={20} $gap={6}><RefreshIcon />초기화</FilterButton>
            <FilterButton $w={104} $pl={22}>인쇄</FilterButton>
          </FilterBar>

          <Split>
            <Listing>
              <HeadRow>
                <HeadCell><HeadIcon><CheckBox /></HeadIcon></HeadCell>
                <HeadCell><HeadIcon $shift={14}><StarIcon /></HeadIcon></HeadCell>
                <HeadCell><HeadLabel>읍면동</HeadLabel></HeadCell>
                <HeadCell><HeadLabel>아파트명</HeadLabel></HeadCell>
                <HeadCell><HeadLabel $w={70}>면적</HeadLabel><Sort><Triangle /></Sort></HeadCell>
                <HeadCell><HeadLabel>동</HeadLabel></HeadCell>
                <HeadCell><HeadLabel>층</HeadLabel></HeadCell>
                <HeadCell><HeadLabel $w={73} $ls={-4}>매·임</HeadLabel></HeadCell>
                <HeadCell><HeadLabel $w={70}>금액</HeadLabel><Sort><Triangle /></Sort></HeadCell>
                <HeadCell><HeadIcon $shift={2}><HeadCheckIcon /></HeadIcon></HeadCell>
                <HeadCell><HeadIcon><HeadCameraIcon /></HeadIcon></HeadCell>
                <HeadCell><HeadIcon><HeadNoteIcon /></HeadIcon></HeadCell>
                <HeadCell><HeadLabel>매물정보</HeadLabel></HeadCell>
                <HeadCell><HeadLabel $w={76}>부/개</HeadLabel></HeadCell>
                <span />
                <HeadCell><HeadLabel $w={90}>수정일</HeadLabel><Sort $on><Triangle down /></Sort></HeadCell>
              </HeadRow>
              <Slot />
              {rows.map((row, i) => <ListingRow key={i} row={row} />)}
              <Veil />
              <Highlight $top={111} />
              <Highlight $top={417} />
              <ArrowOverlay><UpArrow /></ArrowOverlay>
            </Listing>

            <MapPane>
              <MapArt />
              <MapLabel $x={565} $y={106} $fs={26} $color="#3c3c3c">학전</MapLabel>
              <MapLabel $x={532} $y={105} $fs={22} $fw={700} $color="#333" $plain>IC</MapLabel>
              <MapLabel $x={381} $y={286} $ls={6}>학전리</MapLabel>
              <MapLabel $x={80} $y={374} $ls={6}>달전리</MapLabel>
              <MapLabel $x={323} $y={500} $fs={26} $color="#3c3c3c" $ls={-0.5}>조산</MapLabel>
              <MapLabel $x={6} $y={369} $fs={20} $fw={700} $color="#fff" $ls={-1.5} $plain>31</MapLabel>
              <MapControls>
                <Crumbs>
                  <Crumb $on $w={189}>포항시 남구</Crumb>
                  <CrumbArrow />
                  <CrumbGap $w={34} />
                  <Crumb $on $w={123}>대잠동</Crumb>
                  <CrumbArrow />
                  <CrumbGap $w={35} />
                  <Crumb $w={70}>단지</Crumb>
                </Crumbs>
                <SearchBox><SearchIcon /></SearchBox>
              </MapControls>
              <Chip>대잠동<CloseIcon size={25} color="#fff" width={2.200} /></Chip>
            </MapPane>
          </Split>
        </Content>
      </BrowserWindow>
    </Page>
  );
}
